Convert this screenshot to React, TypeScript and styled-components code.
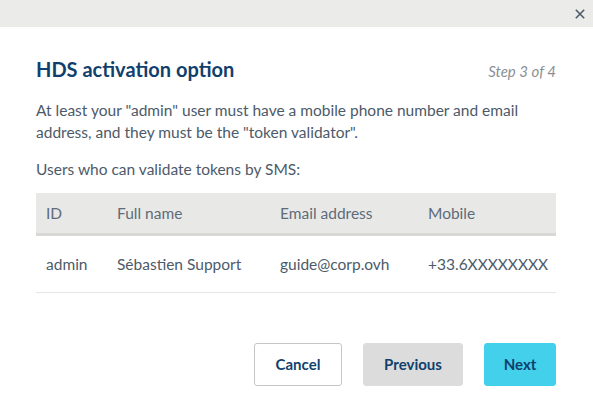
import React from "react";
import styled, { createGlobalStyle } from "styled-components";

const Global = createGlobalStyle`
  html, body { margin: 0; padding: 0; background: #fff; }
  body { font-family: Lato, "Noto Sans", sans-serif; }
  * { box-sizing: border-box; }
`;

const Dialog = styled.div`
  width: 593px;
  height: 413px;
  display: flex;
  flex-direction: column;
  background: #fff;
`;

const TopBar = styled.div`
  height: 27px;
  background: #ebecea;
  display: flex;
  justify-content: flex-end;
  align-items: center;
  padding-right: 8px;
`;

const CloseButton = styled.button`
  border: 0;
  background: transparent;
  padding: 0;
  width: 10px;
  height: 10px;
  display: flex;
  cursor: pointer;
`;

const Body = styled.div`
  padding: 0 37px 0 36px;
  display: flex;
  flex-direction: column;
`;

const HeadRow = styled.div`
  display: flex;
  justify-content: space-between;
  align-items: baseline;
  margin-top: 30px;
`;

const Title = styled.h2`
  margin: 0;
  font-size: 20px;
  font-weight: 700;
  color: #113f6d;
  line-height: 24px;
`;

const Step = styled.span`
  font-size: 15px;
  font-style: italic;
  color: #8a8f93;
`;

const Text = styled.p<{ $top: number }>`
  margin: ${(p) => p.$top}px 0 0;
  font-size: 15.5px;
  line-height: 22px;
  color: #4d5a69;
`;

const Table = styled.table`
  margin-top: 13px;
  width: 520px;
  table-layout: fixed;
  border-collapse: collapse;
  font-size: 15.5px;
  color: #4d5a69;
`;

const Th = styled.th<{ $w: number }>`
  width: ${(p) => p.$w}px;
  text-align: left;
  font-weight: 400;
  background: #e8e9e7;
  height: 41px;
  padding: 0 10px;
  border-bottom: 3px solid #d8d9d7;
  color: #5e6b79;
`;

const Td = styled.td`
  height: 58px;
  padding: 0 10px;
  white-space: nowrap;
  border-bottom: 1px solid #e4e5e4;
`;

const Actions = styled.div`
  display: flex;
  justify-content: flex-end;
  gap: 21px;
  margin-top: 50px;
`;

const Button = styled.button<{ $variant: "ghost" | "muted" | "primary"; $w: number }>`
  width: ${(p) => p.$w}px;
  height: 43px;
  border-radius: 3px;
  font-family: inherit;
  font-size: 15px;
  font-weight: 700;
  color: #113f6d;
  border: 1px solid
    ${(p) => (p.$variant === "ghost" ? "#c4c6c8" : p.$variant === "muted" ? "#dcdcdc" : "#42d0eb")};
  background: ${(p) => (p.$variant === "ghost" ? "#fff" : p.$variant === "muted" ? "#dcdcdc" : "#42d0eb")};
  cursor: pointer;
`;

export default function App() {
  return (
    <>
      <Global />
      <Dialog>
        <TopBar>
          <CloseButton aria-label="Close">
            <svg width="10" height="10" viewBox="0 0 10 10">
              <path d="M0.8 0.8 L9.2 9.2 M9.2 0.8 L0.8 9.2" stroke="#4d5a69" strokeWidth="1.6" />
            </svg>
          </CloseButton>
        </TopBar>
        <Body>
          <HeadRow>
            <Title>HDS activation option</Title>
            <Step>Step 3 of 4</Step>
          </HeadRow>
          <Text $top={18}>
            At least your "admin" user must have a mobile phone number and email address, and they must be the
            "token validator".
          </Text>
          <Text $top={15}>Users who can validate tokens by SMS:</Text>
          <Table>
            <thead>
              <tr>
                <Th $w={71}>ID</Th>
                <Th $w={163}>Full name</Th>
                <Th $w={148}>Email address</Th>
                <Th $w={138}>Mobile</Th>
              </tr>
            </thead>
            <tbody>
              <tr>
                <Td>admin</Td>
                <Td>Sébastien Support</Td>
                <Td>guide@corp.ovh</Td>
                <Td>+33.6XXXXXXXX</Td>
              </tr>
            </tbody>
          </Table>
          <Actions>
            <Button $variant="ghost" $w={88}>Cancel</Button>
            <Button $variant="muted" $w={100}>Previous</Button>
            <Button $variant="primary" $w={72}>Next</Button>
          </Actions>
        </Body>
      </Dialog>
    </>
  );
}
